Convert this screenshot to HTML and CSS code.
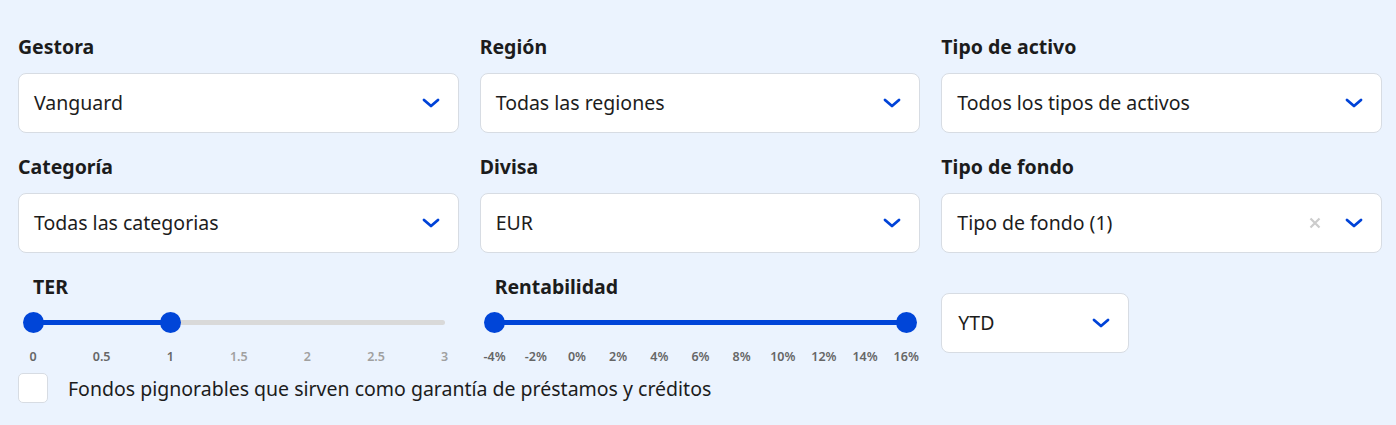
FILE: index.html
```html
<!DOCTYPE html>
<html lang="es">
<head>
    <meta charset="UTF-8">
    <meta name="viewport" content="width=device-width, initial-scale=1.0">
    <title>Filtros de fondos</title>
    <link rel="stylesheet" href="styles.css">
</head>
<body>
    <div class="filters">
        <div class="field">
            <label>Gestora</label>
            <div class="select">
                <span class="value">Vanguard</span>
                <svg class="chevron" viewBox="0 0 18 10"><path d="M2 2l7 6 7-6"/></svg>
            </div>
        </div>
        <div class="field">
            <label>Región</label>
            <div class="select">
                <span class="value">Todas las regiones</span>
                <svg class="chevron" viewBox="0 0 18 10"><path d="M2 2l7 6 7-6"/></svg>
            </div>
        </div>
        <div class="field">
            <label>Tipo de activo</label>
            <div class="select">
                <span class="value">Todos los tipos de activos</span>
                <svg class="chevron" viewBox="0 0 18 10"><path d="M2 2l7 6 7-6"/></svg>
            </div>
        </div>

        <div class="field">
            <label>Categoría</label>
            <div class="select">
                <span class="value">Todas las categorias</span>
                <svg class="chevron" viewBox="0 0 18 10"><path d="M2 2l7 6 7-6"/></svg>
            </div>
        </div>
        <div class="field">
            <label>Divisa</label>
            <div class="select">
                <span class="value">EUR</span>
                <svg class="chevron" viewBox="0 0 18 10"><path d="M2 2l7 6 7-6"/></svg>
            </div>
        </div>
        <div class="field">
            <label>Tipo de fondo</label>
            <div class="select">
                <span class="value">Tipo de fondo (1)</span>
                <svg class="clear" viewBox="0 0 12 12"><path d="M1.5 1.5l9 9M10.5 1.5l-9 9"/></svg>
                <svg class="chevron" viewBox="0 0 18 10"><path d="M2 2l7 6 7-6"/></svg>
            </div>
        </div>

        <div class="field range">
            <label>TER</label>
            <div class="slider">
                <div class="track">
                    <div class="fill" style="left: 0%; width: 33.33%"></div>
                    <span class="thumb" style="left: 0%"></span>
                    <span class="thumb" style="left: 33.33%"></span>
                </div>
                <div class="ticks">
                    <span class="on">0</span>
                    <span class="on">0.5</span>
                    <span class="on">1</span>
                    <span>1.5</span>
                    <span>2</span>
                    <span>2.5</span>
                    <span>3</span>
                </div>
            </div>
        </div>
        <div class="field range">
            <label>Rentabilidad</label>
            <div class="slider">
                <div class="track">
                    <div class="fill" style="left: 0%; width: 100%"></div>
                    <span class="thumb" style="left: 0%"></span>
                    <span class="thumb" style="left: 100%"></span>
                </div>
                <div class="ticks">
                    <span class="on">-4%</span>
                    <span class="on">-2%</span>
                    <span class="on">0%</span>
                    <span class="on">2%</span>
                    <span class="on">4%</span>
                    <span class="on">6%</span>
                    <span class="on">8%</span>
                    <span class="on">10%</span>
                    <span class="on">12%</span>
                    <span class="on">14%</span>
                    <span class="on">16%</span>
                </div>
            </div>
        </div>
        <div class="field period">
            <div class="select small">
                <span class="value">YTD</span>
                <svg class="chevron" viewBox="0 0 18 10"><path d="M2 2l7 6 7-6"/></svg>
            </div>
        </div>
    </div>

    <label class="check">
        <span class="box"></span>
        <span>Fondos pignorables que sirven como garantía de préstamos y créditos</span>
    </label>
</body>
</html>
```

FILE: styles.css
```css
body {
    margin: 0;
    padding: 35px 14px 0 18px;
    background-color: #ebf3fe;
    font-family: "Noto Sans", sans-serif;
    color: #1c1c1c;
}
.filters {
    display: grid;
    grid-template-columns: repeat(3, 1fr);
    column-gap: 21px;
    row-gap: 22px;
}
.field label {
    display: block;
    font-size: 19.5px;
    font-weight: 700;
    line-height: 24px;
    margin-bottom: 14px;
}
.select {
    height: 60px;
    box-sizing: border-box;
    display: flex;
    align-items: center;
    padding: 0 18px 0 15px;
    background-color: #fff;
    border: 1px solid #d7dce3;
    border-radius: 8px;
}
.select .value {
    flex: 1;
    font-size: 19.5px;
    margin-top: -1px;
}
.chevron {
    width: 18px;
    height: 10px;
    fill: none;
    stroke: #0043d8;
    stroke-width: 2.8;
    stroke-linecap: round;
    stroke-linejoin: round;
}
.clear {
    width: 12px;
    height: 12px;
    margin-right: 24px;
    fill: none;
    stroke: #cccccc;
    stroke-width: 2.2;
}
.range label {
    padding-left: 15px;
    margin-bottom: 0;
}
.slider {
    padding: 0 14px 0 15px;
}
.track {
    position: relative;
    height: 5px;
    margin-top: 21px;
    background-color: #d9d9d9;
    border-radius: 3px;
}
.fill {
    position: absolute;
    top: 0;
    height: 5px;
    background-color: #0045d8;
}
.thumb {
    position: absolute;
    top: 50%;
    width: 21px;
    height: 21px;
    margin: -10.5px 0 0 -10.5px;
    border-radius: 50%;
    background-color: #0045d8;
}
.ticks {
    display: flex;
    justify-content: space-between;
    margin-top: 23px;
}
.ticks span {
    width: 0;
    display: flex;
    justify-content: center;
    font-size: 12.5px;
    font-weight: 600;
    color: #a0a0a0;
    white-space: nowrap;
}
.ticks span.on {
    color: #666;
}
.period {
    padding-top: 18px;
}
.select.small {
    width: 188px;
    padding-left: 16px;
    padding-right: 18px;
}
.check {
    display: flex;
    align-items: center;
    gap: 20px;
    margin-top: 8px;
    font-size: 19.5px;
}
.check .box {
    width: 30px;
    height: 30px;
    box-sizing: border-box;
    background-color: #fff;
    border: 1px solid #d7dce3;
    border-radius: 5px;
}
```
